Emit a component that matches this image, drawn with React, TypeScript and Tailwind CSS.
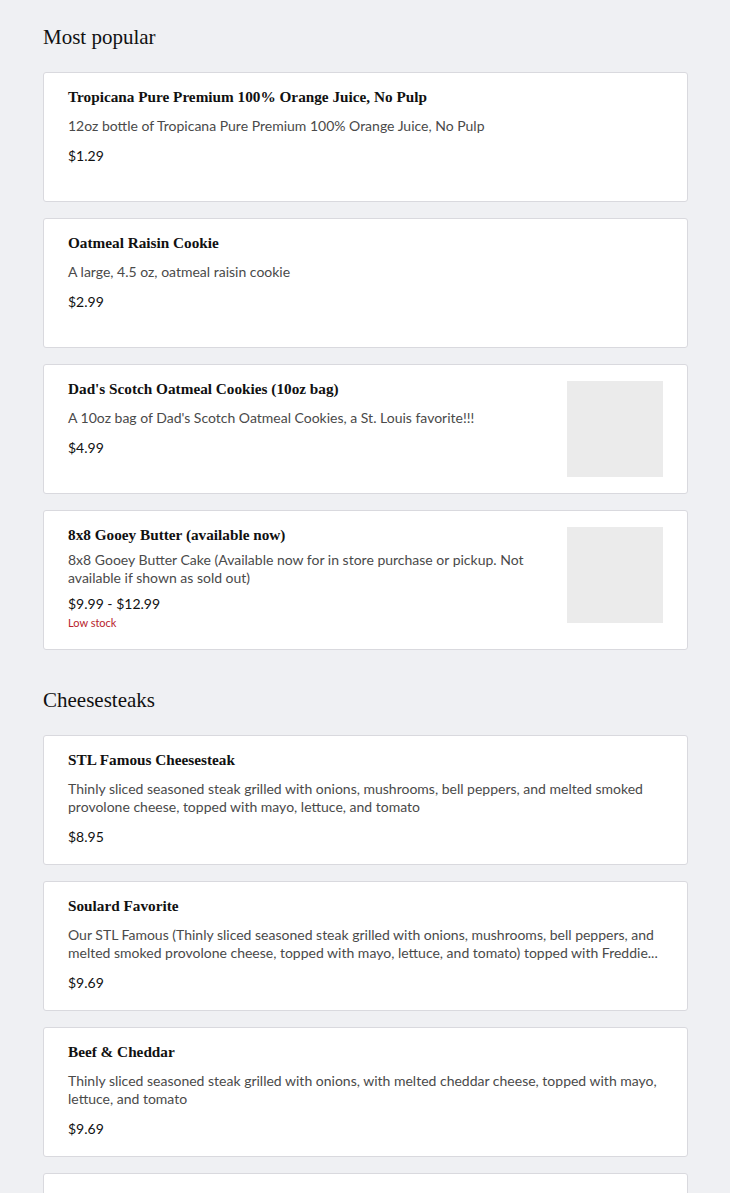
import React from 'react';

type Item = {
  name: string;
  description: string;
  price: string;
  image?: boolean;
  lowStock?: boolean;
};

const sections: { title: string; items: Item[] }[] = [
  {
    title: 'Most popular',
    items: [
      {
        name: 'Tropicana Pure Premium 100% Orange Juice, No Pulp',
        description: '12oz bottle of Tropicana Pure Premium 100% Orange Juice, No Pulp',
        price: '$1.29',
      },
      {
        name: 'Oatmeal Raisin Cookie',
        description: 'A large, 4.5 oz, oatmeal raisin cookie',
        price: '$2.99',
      },
      {
        name: "Dad's Scotch Oatmeal Cookies (10oz bag)",
        description: "A 10oz bag of Dad's Scotch Oatmeal Cookies, a St. Louis favorite!!!",
        price: '$4.99',
        image: true,
      },
      {
        name: '8x8 Gooey Butter (available now)',
        description:
          '8x8 Gooey Butter Cake (Available now for in store purchase or pickup. Not available if shown as sold out)',
        price: '$9.99 - $12.99',
        image: true,
        lowStock: true,
      },
    ],
  },
  {
    title: 'Cheesesteaks',
    items: [
      {
        name: 'STL Famous Cheesesteak',
        description:
          'Thinly sliced seasoned steak grilled with onions, mushrooms, bell peppers, and melted smoked provolone cheese, topped with mayo, lettuce, and tomato',
        price: '$8.95',
      },
      {
        name: 'Soulard Favorite',
        description:
          'Our STL Famous (Thinly sliced seasoned steak grilled with onions, mushrooms, bell peppers, and melted smoked provolone cheese, topped with mayo, lettuce, and tomato) topped with Freddie...',
        price: '$9.69',
      },
      {
        name: 'Beef & Cheddar',
        description:
          'Thinly sliced seasoned steak grilled with onions, with melted cheddar cheese, topped with mayo, lettuce, and tomato',
        price: '$9.69',
      },
      {
        name: 'Philly Steak',
        description: 'Thinly sliced seasoned steak grilled with onions and melted provolone cheese',
        price: '$8.95',
      },
    ],
  },
];

const serif = "font-['Liberation_Serif','DejaVu_Serif',serif]";
const sans = "font-['Lato','Open_Sans',sans-serif]";

function MenuCard({ item }: { item: Item }) {
  return (
    <div className="flex min-h-[130px] gap-4 rounded-[3px] border border-[#d9d9de] bg-white px-6 py-4">
      <div className="min-w-0 flex-1">
        <h3 className={`${serif} text-[15.25px] leading-4 font-bold text-[#111]`}>{item.name}</h3>
        <p
          className={`${sans} text-[14px] leading-[18px] text-[#4a4a4a] ${item.lowStock ? 'mt-2' : 'mt-3'}`}
        >
          {item.description}
        </p>
        <p className={`${sans} text-[14px] leading-[18px] text-[#111] ${item.lowStock ? 'mt-2' : 'mt-3'}`}>
          {item.price}
        </p>
        {item.lowStock && <p className={`${sans} text-[11px] leading-5 text-[#b8232c]`}>Low stock</p>}
      </div>
      {item.image && <div className="h-24 w-24 shrink-0 bg-[#ebebeb]" />}
    </div>
  );
}

export default function App() {
  return (
    <main className="min-h-screen bg-[#eff0f3] pt-[23px] pr-[42px] pb-10 pl-[43px]">
      {sections.map((section) => (
        <section key={section.title} className="mb-9">
          <h2 className={`${serif} text-[21px] leading-7 text-[#111]`}>{section.title}</h2>
          <div className="mt-[21px] flex flex-col gap-4">
            {section.items.map((item) => (
              <MenuCard key={item.name} item={item} />
            ))}
          </div>
        </section>
      ))}
    </main>
  );
}
